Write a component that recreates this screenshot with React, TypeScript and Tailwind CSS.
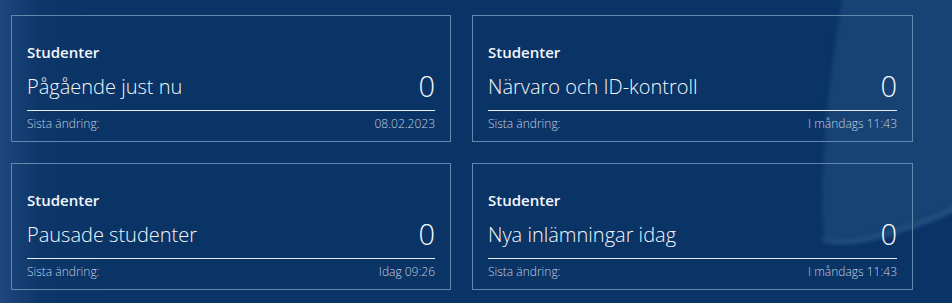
const cards = [
  { label: "Pågående just nu", value: 0, changed: "08.02.2023" },
  { label: "Närvaro och ID-kontroll", value: 0, changed: "I måndags 11:43" },
  { label: "Pausade studenter", value: 0, changed: "Idag 09:26" },
  { label: "Nya inlämningar idag", value: 0, changed: "I måndags 11:43" },
];

type CardProps = {
  label: string;
  value: number;
  changed: string;
};

function StatCard(props: CardProps) {
  return (
    <div className="flex h-[127px] flex-col border border-[#6288ab] px-[15px] pt-[26px] pb-[7px] text-[#f4f7fb]">
      <span className="text-[15px] leading-[20px] font-semibold">Studenter</span>
      <div className="mt-[7px] flex items-end justify-between">
        <span className="pb-[3px] text-[20px] leading-[26px] font-light">
          {props.label}
        </span>
        <span className="text-[29px] leading-[34px] font-light">
          {props.value}
        </span>
      </div>
      <hr className="mt-[7px] border-t border-[#e8eef5]" />
      <div className="mt-[5px] flex justify-between text-[12px] leading-[16px] font-light text-[#c3d0e0]">
        <span>Sista ändring:</span>
        <span>{props.changed}</span>
      </div>
    </div>
  );
}

// the light swoosh in the top right corner of the backdrop
function Backdrop() {
  return (
    <svg
      className="pointer-events-none absolute inset-0"
      width="952"
      height="303"
      viewBox="0 0 952 303"
    >
      <defs>
        <filter id="soft" x="-10%" y="-10%" width="120%" height="120%">
          <feGaussianBlur stdDeviation="2" />
        </filter>
      </defs>
      <path
        d="M843 -5 C828 80 818 180 824 236 C836 250 900 236 960 208 L960 -5 Z"
        fill="#1a4676"
        fillOpacity="0.85"
        filter="url(#soft)"
      />
      <path
        d="M822 238 C836 250 900 236 960 206"
        fill="none"
        stroke="#2d5b8d"
        strokeOpacity="0.7"
        strokeWidth="4"
        filter="url(#soft)"
      />
    </svg>
  );
}

export default function App() {
  return (
    <div className="relative h-[303px] w-[952px] overflow-hidden bg-[#0a3366] font-['Open_Sans',sans-serif]">
      <div className="pointer-events-none absolute inset-0 bg-[linear-gradient(90deg,rgba(40,80,135,0.7)_0px,rgba(20,60,110,0.3)_40px,transparent_110px)]" />
      <Backdrop />

      <div className="relative grid grid-cols-[440px_441px] gap-[21px] pt-[15px] pl-[11px]">
        {cards.map((card) => (
          <StatCard key={card.label} {...card} />
        ))}
      </div>
    </div>
  );
}
